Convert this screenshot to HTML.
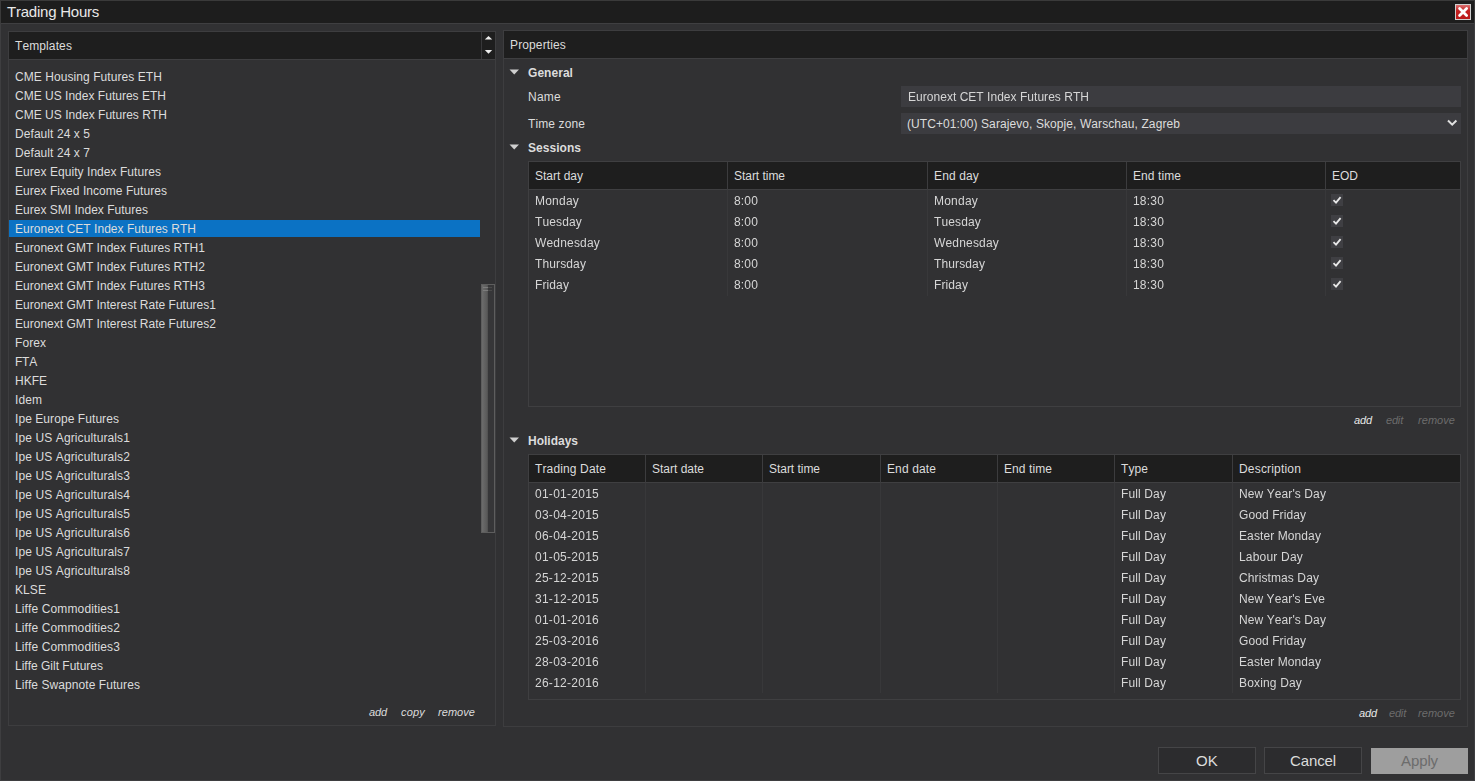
<!DOCTYPE html>
<html><head><meta charset="utf-8">
<style>
*{box-sizing:border-box;margin:0;padding:0}
html,body{width:1475px;height:781px;overflow:hidden;background:#313133;font-family:"Liberation Sans",sans-serif;font-size:12px;color:#dcdcdc}
.a{position:absolute}
.t{position:absolute;white-space:nowrap;line-height:14px}
.b{font-weight:bold}
#win{position:absolute;left:0;top:0;width:1475px;height:781px;background:#313133;border:1px solid #3e3e40;border-right:1px solid #3e3e40}
#title{position:absolute;left:0;top:0;width:1475px;height:24px;background:#1d1d1d;border-top:1px solid #3a3a3a;border-left:1px solid #3a3a3a;border-right:1px solid #3a3a3a;border-bottom:1px solid #3f3f41}
.panel{position:absolute;border:1px solid #3d3d3f;background:#313133}
.hdr{position:absolute;background:#1e1e1e;border-bottom:1px solid #3f3f41}
.tbl{position:absolute;border:1px solid #3f3f41;background:#313133}
.thd{position:absolute;background:#1e1e1e;border-bottom:1px solid #3f3f41}
.vlh{background:#3c3c3e}
.vlb{background:#38383a}
.lnk{position:absolute;font-style:italic;font-size:11px;line-height:13px;white-space:nowrap;color:#dcdcdc}
.dis{color:#6c6c6c}
.inp{background:#3c3c40}
.chk{width:12px;height:12px;background:#3f3f43}
.sb{border:1px solid #5e5e5e;background:linear-gradient(90deg,#6c6c6c,#585858 45%,#363638 50%,#363638)}
.btn{position:absolute;border:1px solid #454547;background:#2c2c2e;text-align:center;font-size:15px;line-height:25px;color:#dcdcdc}
.t,.lnk{font-kerning:none;font-variant-ligatures:none}
.bt{font-size:15px;line-height:17px;color:#dcdcdc}
.td{will-change:transform;color:#d6d6d6}
</style></head><body>
<div id="win"></div>
<div id="title">
<div class="t" style="left:6px;top:2px;letter-spacing:-0.227px;font-size:15px;line-height:17px;color:#e8e8e8">Trading Hours</div>
<div class="a" style="left:1454px;top:3px;width:16px;height:16px;background:linear-gradient(#d97070,#c42222 40%,#bb1a1a);border:1px solid #cfcfcf">
<svg class="a" style="left:0;top:0" width="14" height="14" viewBox="0 0 14 14"><path d="M3.6 3.6 L10.6 10.6 M10.6 3.6 L3.6 10.6" stroke="#fff" stroke-width="2.8" stroke-linecap="round"/></svg>
</div></div>
<div class="panel" style="left:8px;top:31px;width:488px;height:695px"></div>
<div class="hdr" style="left:9px;top:32px;width:486px;height:28px"></div>
<div class="t" style="left:15px;top:39px;letter-spacing:0.107px;">Templates</div>
<div class="a" style="left:481px;top:32px;width:1px;height:27px;background:#38383a"></div>
<svg class="a" style="left:482px;top:32px" width="13" height="26" viewBox="0 0 13 26"><path d="M2.8 7.6 L6.5 3.9 L10.2 7.6 Z" fill="#ececec"/><path d="M2.8 18 L6.5 21.7 L10.2 18 Z" fill="#ececec"/></svg>
<div class="t li" style="left:15px;top:70px;letter-spacing:0.071px;">CME Housing Futures ETH</div>
<div class="t li" style="left:15px;top:89px;letter-spacing:0.012px;">CME US Index Futures ETH</div>
<div class="t li" style="left:15px;top:108px;letter-spacing:0.026px;">CME US Index Futures RTH</div>
<div class="t li" style="left:15px;top:127px;letter-spacing:0.068px;">Default 24 x 5</div>
<div class="t li" style="left:15px;top:146px;letter-spacing:0.068px;">Default 24 x 7</div>
<div class="t li" style="left:15px;top:165px;letter-spacing:0.049px;">Eurex Equity Index Futures</div>
<div class="t li" style="left:15px;top:184px;letter-spacing:0.049px;">Eurex Fixed Income Futures</div>
<div class="t li" style="left:15px;top:203px;letter-spacing:0.012px;">Eurex SMI Index Futures</div>
<div class="a" style="left:9px;top:220px;width:471px;height:17px;background:#0b72c4"></div>
<div class="t li" style="left:15px;top:222px;letter-spacing:0.031px;">Euronext CET Index Futures RTH</div>
<div class="t li" style="left:15px;top:241px;letter-spacing:0.019px;">Euronext GMT Index Futures RTH1</div>
<div class="t li" style="left:15px;top:260px;letter-spacing:0.019px;">Euronext GMT Index Futures RTH2</div>
<div class="t li" style="left:15px;top:279px;letter-spacing:0.019px;">Euronext GMT Index Futures RTH3</div>
<div class="t li" style="left:15px;top:298px;letter-spacing:0.007px;">Euronext GMT Interest Rate Futures1</div>
<div class="t li" style="left:15px;top:317px;letter-spacing:0.007px;">Euronext GMT Interest Rate Futures2</div>
<div class="t li" style="left:15px;top:336px;letter-spacing:0.065px;">Forex</div>
<div class="t li" style="left:15px;top:355px;letter-spacing:-0.221px;">FTA</div>
<div class="t li" style="left:15px;top:374px;letter-spacing:-0.001px;">HKFE</div>
<div class="t li" style="left:15px;top:393px;letter-spacing:0.081px;">Idem</div>
<div class="t li" style="left:15px;top:412px;letter-spacing:0.071px;">Ipe Europe Futures</div>
<div class="t li" style="left:15px;top:431px;letter-spacing:0.109px;">Ipe US Agriculturals1</div>
<div class="t li" style="left:15px;top:450px;letter-spacing:0.109px;">Ipe US Agriculturals2</div>
<div class="t li" style="left:15px;top:469px;letter-spacing:0.109px;">Ipe US Agriculturals3</div>
<div class="t li" style="left:15px;top:488px;letter-spacing:0.109px;">Ipe US Agriculturals4</div>
<div class="t li" style="left:15px;top:507px;letter-spacing:0.109px;">Ipe US Agriculturals5</div>
<div class="t li" style="left:15px;top:526px;letter-spacing:0.109px;">Ipe US Agriculturals6</div>
<div class="t li" style="left:15px;top:545px;letter-spacing:0.109px;">Ipe US Agriculturals7</div>
<div class="t li" style="left:15px;top:564px;letter-spacing:0.109px;">Ipe US Agriculturals8</div>
<div class="t li" style="left:15px;top:583px;letter-spacing:0.079px;">KLSE</div>
<div class="t li" style="left:15px;top:602px;letter-spacing:0.127px;">Liffe Commodities1</div>
<div class="t li" style="left:15px;top:621px;letter-spacing:0.127px;">Liffe Commodities2</div>
<div class="t li" style="left:15px;top:640px;letter-spacing:0.127px;">Liffe Commodities3</div>
<div class="t li" style="left:15px;top:659px;letter-spacing:-0.002px;">Liffe Gilt Futures</div>
<div class="t li" style="left:15px;top:678px;letter-spacing:0.073px;">Liffe Swapnote Futures</div>
<div class="a sb" style="left:481px;top:284px;width:14px;height:249px"></div>
<div class="a" style="left:483px;top:287px;width:9px;height:1px;background:linear-gradient(90deg,#7c7c7c 50%,#4a4a4a 50%)"></div>
<div class="a" style="left:483px;top:290px;width:9px;height:1px;background:linear-gradient(90deg,#7c7c7c 50%,#4a4a4a 50%)"></div>
<div class="lnk" style="left:369px;top:706px;letter-spacing:-0.118px;">add</div>
<div class="lnk" style="left:401px;top:706px;letter-spacing:0.191px;">copy</div>
<div class="lnk" style="left:438px;top:706px;letter-spacing:0.053px;">remove</div>
<div class="panel" style="left:503px;top:30px;width:965px;height:697px"></div>
<div class="hdr" style="left:504px;top:31px;width:963px;height:28px"></div>
<div class="t" style="left:510px;top:38px;letter-spacing:0.131px;">Properties</div>
<svg class="a" style="left:509px;top:69px" width="11" height="7" viewBox="0 0 11 7"><path d="M0.5 0.5 L10 0.5 L5.25 5.5 Z" fill="#cfcfcf"/></svg>
<div class="t b" style="left:528px;top:66px;letter-spacing:0.044px;">General</div>
<div class="t" style="left:528px;top:90px;letter-spacing:0.248px;">Name</div>
<div class="t" style="left:528px;top:117px;letter-spacing:0.109px;">Time zone</div>
<div class="a inp" style="left:901px;top:86px;width:560px;height:21px"></div>
<div class="t td" style="left:908px;top:90px;letter-spacing:0.031px;">Euronext CET Index Futures RTH</div>
<div class="a inp" style="left:901px;top:113px;width:560px;height:21px"></div>
<div class="t" style="left:907px;top:117px;letter-spacing:0.084px;">(UTC+01:00) Sarajevo, Skopje, Warschau, Zagreb</div>
<svg class="a" style="left:1447px;top:119px" width="11" height="8" viewBox="0 0 11 8"><path d="M1 1.5 L5.2 5.7 L9.4 1.5" fill="none" stroke="#e0e0e0" stroke-width="2"/></svg>
<svg class="a" style="left:509px;top:144px" width="11" height="7" viewBox="0 0 11 7"><path d="M0.5 0.5 L10 0.5 L5.25 5.5 Z" fill="#cfcfcf"/></svg>
<div class="t b" style="left:528px;top:141px;letter-spacing:0.038px;">Sessions</div>
<div class="a tbl" style="left:528px;top:161px;width:933px;height:246px"></div>
<div class="a thd" style="left:529px;top:162px;width:931px;height:28px"></div>
<div class="t" style="left:535px;top:169px;letter-spacing:-0.003px;">Start day</div>
<div class="a vlh" style="left:727px;top:162px;width:1px;height:28px"></div>
<div class="a vlb" style="left:727px;top:190px;width:1px;height:106px"></div>
<div class="t" style="left:734px;top:169px;letter-spacing:-0.035px;">Start time</div>
<div class="a vlh" style="left:927px;top:162px;width:1px;height:28px"></div>
<div class="a vlb" style="left:927px;top:190px;width:1px;height:106px"></div>
<div class="t" style="left:934px;top:169px;letter-spacing:0.138px;">End day</div>
<div class="a vlh" style="left:1126px;top:162px;width:1px;height:28px"></div>
<div class="a vlb" style="left:1126px;top:190px;width:1px;height:106px"></div>
<div class="t" style="left:1133px;top:169px;letter-spacing:0.081px;">End time</div>
<div class="a vlh" style="left:1325px;top:162px;width:1px;height:28px"></div>
<div class="a vlb" style="left:1325px;top:190px;width:1px;height:106px"></div>
<div class="t" style="left:1332px;top:169px;letter-spacing:-0.001px;">EOD</div>
<div class="t td" style="left:535px;top:194px;letter-spacing:0.218px;">Monday</div>
<div class="t td" style="left:734px;top:194px;letter-spacing:0.161px;">8:00</div>
<div class="t td" style="left:934px;top:194px;letter-spacing:0.218px;">Monday</div>
<div class="t td" style="left:1133px;top:194px;letter-spacing:0.194px;">18:30</div>
<div class="a chk" style="left:1331px;top:194px"><svg width="12" height="12" viewBox="0 0 12 12"><path d="M2.5 6.2 L5 8.6 L9.6 3.2" fill="none" stroke="#e8e8e8" stroke-width="1.8"/></svg></div>
<div class="t td" style="left:535px;top:215px;letter-spacing:0.139px;">Tuesday</div>
<div class="t td" style="left:734px;top:215px;letter-spacing:0.161px;">8:00</div>
<div class="t td" style="left:934px;top:215px;letter-spacing:0.139px;">Tuesday</div>
<div class="t td" style="left:1133px;top:215px;letter-spacing:0.194px;">18:30</div>
<div class="a chk" style="left:1331px;top:215px"><svg width="12" height="12" viewBox="0 0 12 12"><path d="M2.5 6.2 L5 8.6 L9.6 3.2" fill="none" stroke="#e8e8e8" stroke-width="1.8"/></svg></div>
<div class="t td" style="left:535px;top:236px;letter-spacing:0.181px;">Wednesday</div>
<div class="t td" style="left:734px;top:236px;letter-spacing:0.161px;">8:00</div>
<div class="t td" style="left:934px;top:236px;letter-spacing:0.181px;">Wednesday</div>
<div class="t td" style="left:1133px;top:236px;letter-spacing:0.194px;">18:30</div>
<div class="a chk" style="left:1331px;top:236px"><svg width="12" height="12" viewBox="0 0 12 12"><path d="M2.5 6.2 L5 8.6 L9.6 3.2" fill="none" stroke="#e8e8e8" stroke-width="1.8"/></svg></div>
<div class="t td" style="left:535px;top:257px;letter-spacing:0.122px;">Thursday</div>
<div class="t td" style="left:734px;top:257px;letter-spacing:0.161px;">8:00</div>
<div class="t td" style="left:934px;top:257px;letter-spacing:0.122px;">Thursday</div>
<div class="t td" style="left:1133px;top:257px;letter-spacing:0.194px;">18:30</div>
<div class="a chk" style="left:1331px;top:257px"><svg width="12" height="12" viewBox="0 0 12 12"><path d="M2.5 6.2 L5 8.6 L9.6 3.2" fill="none" stroke="#e8e8e8" stroke-width="1.8"/></svg></div>
<div class="t td" style="left:535px;top:278px;letter-spacing:0.110px;">Friday</div>
<div class="t td" style="left:734px;top:278px;letter-spacing:0.161px;">8:00</div>
<div class="t td" style="left:934px;top:278px;letter-spacing:0.110px;">Friday</div>
<div class="t td" style="left:1133px;top:278px;letter-spacing:0.194px;">18:30</div>
<div class="a chk" style="left:1331px;top:278px"><svg width="12" height="12" viewBox="0 0 12 12"><path d="M2.5 6.2 L5 8.6 L9.6 3.2" fill="none" stroke="#e8e8e8" stroke-width="1.8"/></svg></div>
<div class="lnk" style="left:1354px;top:414px;letter-spacing:-0.118px;color:#e8e8e8">add</div>
<div class="lnk dis" style="left:1386px;top:414px;letter-spacing:-0.184px;">edit</div>
<div class="lnk dis" style="left:1418px;top:414px;letter-spacing:0.053px;">remove</div>
<svg class="a" style="left:509px;top:437px" width="11" height="7" viewBox="0 0 11 7"><path d="M0.5 0.5 L10 0.5 L5.25 5.5 Z" fill="#cfcfcf"/></svg>
<div class="t b" style="left:528px;top:434px;letter-spacing:-0.002px;">Holidays</div>
<div class="a tbl" style="left:528px;top:454px;width:933px;height:246px"></div>
<div class="a thd" style="left:529px;top:455px;width:931px;height:28px"></div>
<div class="t" style="left:535px;top:462px;letter-spacing:0.136px;">Trading Date</div>
<div class="a vlh" style="left:645px;top:455px;width:1px;height:28px"></div>
<div class="a vlb" style="left:645px;top:483px;width:1px;height:210px"></div>
<div class="t" style="left:652px;top:462px;letter-spacing:-0.003px;">Start date</div>
<div class="a vlh" style="left:762px;top:455px;width:1px;height:28px"></div>
<div class="a vlb" style="left:762px;top:483px;width:1px;height:210px"></div>
<div class="t" style="left:769px;top:462px;letter-spacing:-0.035px;">Start time</div>
<div class="a vlh" style="left:880px;top:455px;width:1px;height:28px"></div>
<div class="a vlb" style="left:880px;top:483px;width:1px;height:210px"></div>
<div class="t" style="left:887px;top:462px;letter-spacing:0.120px;">End date</div>
<div class="a vlh" style="left:997px;top:455px;width:1px;height:28px"></div>
<div class="a vlb" style="left:997px;top:483px;width:1px;height:210px"></div>
<div class="t" style="left:1004px;top:462px;letter-spacing:0.081px;">End time</div>
<div class="a vlh" style="left:1114px;top:455px;width:1px;height:28px"></div>
<div class="a vlb" style="left:1114px;top:483px;width:1px;height:210px"></div>
<div class="t" style="left:1121px;top:462px;letter-spacing:0.081px;">Type</div>
<div class="a vlh" style="left:1232px;top:455px;width:1px;height:28px"></div>
<div class="a vlb" style="left:1232px;top:483px;width:1px;height:210px"></div>
<div class="t" style="left:1239px;top:462px;letter-spacing:0.180px;">Description</div>
<div class="t td" style="left:535px;top:487px;letter-spacing:0.262px;">01-01-2015</div>
<div class="t td" style="left:1121px;top:487px;letter-spacing:0.124px;">Full Day</div>
<div class="t td" style="left:1239px;top:487px;letter-spacing:0.095px;">New Year&#39;s Day</div>
<div class="t td" style="left:535px;top:508px;letter-spacing:0.262px;">03-04-2015</div>
<div class="t td" style="left:1121px;top:508px;letter-spacing:0.124px;">Full Day</div>
<div class="t td" style="left:1239px;top:508px;letter-spacing:0.088px;">Good Friday</div>
<div class="t td" style="left:535px;top:529px;letter-spacing:0.262px;">06-04-2015</div>
<div class="t td" style="left:1121px;top:529px;letter-spacing:0.124px;">Full Day</div>
<div class="t td" style="left:1239px;top:529px;letter-spacing:0.099px;">Easter Monday</div>
<div class="t td" style="left:535px;top:550px;letter-spacing:0.262px;">01-05-2015</div>
<div class="t td" style="left:1121px;top:550px;letter-spacing:0.124px;">Full Day</div>
<div class="t td" style="left:1239px;top:550px;letter-spacing:0.196px;">Labour Day</div>
<div class="t td" style="left:535px;top:571px;letter-spacing:0.262px;">25-12-2015</div>
<div class="t td" style="left:1121px;top:571px;letter-spacing:0.124px;">Full Day</div>
<div class="t td" style="left:1239px;top:571px;letter-spacing:0.102px;">Christmas Day</div>
<div class="t td" style="left:535px;top:592px;letter-spacing:0.262px;">31-12-2015</div>
<div class="t td" style="left:1121px;top:592px;letter-spacing:0.124px;">Full Day</div>
<div class="t td" style="left:1239px;top:592px;letter-spacing:0.071px;">New Year&#39;s Eve</div>
<div class="t td" style="left:535px;top:613px;letter-spacing:0.262px;">01-01-2016</div>
<div class="t td" style="left:1121px;top:613px;letter-spacing:0.124px;">Full Day</div>
<div class="t td" style="left:1239px;top:613px;letter-spacing:0.095px;">New Year&#39;s Day</div>
<div class="t td" style="left:535px;top:634px;letter-spacing:0.262px;">25-03-2016</div>
<div class="t td" style="left:1121px;top:634px;letter-spacing:0.124px;">Full Day</div>
<div class="t td" style="left:1239px;top:634px;letter-spacing:0.088px;">Good Friday</div>
<div class="t td" style="left:535px;top:655px;letter-spacing:0.262px;">28-03-2016</div>
<div class="t td" style="left:1121px;top:655px;letter-spacing:0.124px;">Full Day</div>
<div class="t td" style="left:1239px;top:655px;letter-spacing:0.099px;">Easter Monday</div>
<div class="t td" style="left:535px;top:676px;letter-spacing:0.262px;">26-12-2016</div>
<div class="t td" style="left:1121px;top:676px;letter-spacing:0.124px;">Full Day</div>
<div class="t td" style="left:1239px;top:676px;letter-spacing:0.163px;">Boxing Day</div>
<div class="lnk" style="left:1359px;top:707px;letter-spacing:-0.118px;color:#e8e8e8">add</div>
<div class="lnk dis" style="left:1389px;top:707px;letter-spacing:-0.184px;">edit</div>
<div class="lnk dis" style="left:1418px;top:707px;letter-spacing:0.053px;">remove</div>
<div class="btn" style="left:1158px;top:747px;width:98px;height:27px"></div>
<div class="btn" style="left:1264px;top:747px;width:98px;height:27px"></div>
<div class="btn" style="left:1371px;top:748px;width:97px;height:26px;background:#9e9e9e;border-color:#9e9e9e"></div>
<div class="t bt" style="left:1196px;top:752px;letter-spacing:0.164px;">OK</div>
<div class="t bt" style="left:1290px;top:752px;letter-spacing:-0.115px;">Cancel</div>
<div class="t bt" style="left:1401px;top:752px;letter-spacing:-0.104px;color:#6c6c6c">Apply</div>
</body></html>
